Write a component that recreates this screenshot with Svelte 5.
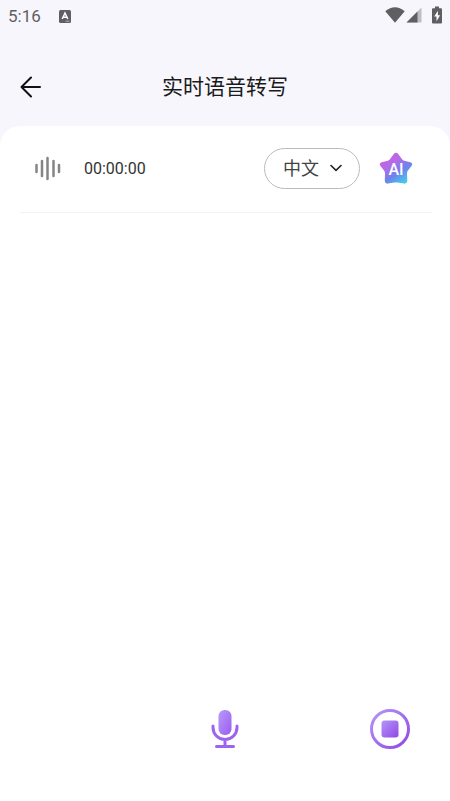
<script>
    const languages = [
        { value: 'zh', label: '中文' },
        { value: 'en', label: '英文' },
        { value: 'ja', label: '日文' }
    ];

    // Wave icon bars: x, top, bottom
    const bars = [
        [1.5, 9, 16],
        [7, 5, 20],
        [12.5, 2, 23],
        [18.5, 5, 20],
        [24, 9, 16]
    ];

    let language = $state('zh');
    let seconds = $state(0);
    let timer = null;

    const pad = (n) => String(n).padStart(2, '0');

    let elapsed = $derived(
        `${pad(Math.floor(seconds / 3600))}:${pad(Math.floor(seconds / 60) % 60)}:${pad(seconds % 60)}`
    );

    function start() {
        if (timer) return;
        timer = setInterval(() => seconds++, 1000);
    }

    function stop() {
        clearInterval(timer);
        timer = null;
    }
</script>

<div class="screen">
    <div class="status-bar">
        <span class="clock">5:16</span>
        <svg class="app-badge" width="12" height="13" viewBox="0 0 12 13" aria-hidden="true">
            <rect width="12" height="13" rx="1.5" fill="#5f5f63" />
            <path d="M3.2 9 6 3l2.8 6M4.3 7.2h3.4" fill="none" stroke="#fff" stroke-width="1.5" />
            <path d="M6.5 11.2h4" stroke="#c8c8cc" stroke-width="0.8" />
        </svg>
        <div class="system-icons">
            <svg width="20" height="16" viewBox="0 0 20 16" aria-hidden="true">
                <path d="M0.3 4.2Q10-3.6 19.7 4.2L10 15.8Z" fill="#5f5f63" />
            </svg>
            <svg class="signal" width="16" height="16" viewBox="0 0 16 16" aria-hidden="true">
                <path d="M15.5 0.5v15H0.5Z" fill="#bebec4" />
                <path d="M11.5 4.5v11H0.5Z" fill="#5f5f63" />
            </svg>
            <svg class="battery" width="10" height="18" viewBox="0 0 10 18" aria-hidden="true">
                <path d="M3 0.5h4v1.7h2q1 0 1 1v13.3q0 1-1 1H1q-1 0-1-1V3.2q0-1 1-1h2Z" fill="#5f5f63" />
                <path d="M5.9 4.8 2.2 10.5h2.3v4.7l3.6-6H5.9Z" fill="#fff" />
            </svg>
        </div>
    </div>

    <header>
        <button class="back" aria-label="返回">
            <svg width="22" height="22" viewBox="0 0 22 22" aria-hidden="true">
                <path d="M11 1.5 1.5 11l9.5 9.5M1.5 11H20" />
            </svg>
        </button>
        <h1>实时语音转写</h1>
    </header>

    <main>
        <div class="toolbar">
            <svg class="wave" width="26" height="25" viewBox="0 0 26 25" aria-hidden="true">
                {#each bars as [x, top, bottom]}
                    <path d="M{x} {top}V{bottom}" />
                {/each}
            </svg>
            <span class="time">{elapsed}</span>

            <div class="language">
                <select aria-label="语言" bind:value={language}>
                    {#each languages as item}
                        <option value={item.value}>{item.label}</option>
                    {/each}
                </select>
                <svg width="12" height="8" viewBox="0 0 12 8" aria-hidden="true">
                    <path d="M1 1.5 6 6.3 11 1.5" />
                </svg>
            </div>

            <button class="ai" aria-label="AI">
                <svg width="34" height="34" viewBox="0 0 34 34" aria-hidden="true">
                    <defs>
                        <linearGradient id="star" x1="0.15" y1="0.1" x2="0.8" y2="1">
                            <stop offset="0" stop-color="#d05be0" />
                            <stop offset="0.3" stop-color="#b46be8" />
                            <stop offset="0.62" stop-color="#6e83ec" />
                            <stop offset="1" stop-color="#3fd5ea" />
                        </linearGradient>
                    </defs>
                    <path
                        d="M14.8 2Q17-0.6 19.2 2L23.3 7.6Q24 8.5 25.2 8.8L31.3 10.3Q34.4 11.3 32.5 14L28.8 18.8Q28 20 28 21.4L28.3 28.6Q28.2 32 25 31.6L18.6 30.6Q17 30.4 15.4 30.6L9 31.6Q5.8 32 5.8 28.6L6 21.4Q6 20 5.2 18.8L1.5 14Q-0.4 11.3 2.7 10.3L8.8 8.8Q10 8.5 10.7 7.6Z"
                        fill="url(#star)"
                    />
                    <text x="17" y="23" text-anchor="middle">AI</text>
                </svg>
            </button>
        </div>

        <div class="transcript"></div>

        <footer>
            <button class="mic" aria-label="开始录音" onclick={start}>
                <svg width="28" height="40" viewBox="0 0 28 40" aria-hidden="true">
                    <defs>
                        <linearGradient id="mic" x1="0" y1="0" x2="1" y2="1">
                            <stop offset="0" stop-color="#b99afc" />
                            <stop offset="1" stop-color="#9a5cf0" />
                        </linearGradient>
                    </defs>
                    <rect x="7.5" y="1" width="13" height="25" rx="6" fill="url(#mic)" />
                    <path d="M2 17v1.5a12 12 0 0 0 24 0V17M14 31v6M5.5 37.5h17" />
                </svg>
            </button>
            <button class="stop" aria-label="停止录音" onclick={stop}>
                <svg width="40" height="40" viewBox="0 0 40 40" aria-hidden="true">
                    <defs>
                        <linearGradient id="ring" x1="0" y1="0" x2="1" y2="1">
                            <stop offset="0" stop-color="#b497fa" />
                            <stop offset="1" stop-color="#9147e4" />
                        </linearGradient>
                    </defs>
                    <circle cx="20" cy="20" r="18.5" fill="none" stroke="url(#ring)" stroke-width="3" />
                    <rect x="11.5" y="11.5" width="17" height="17" rx="3" fill="url(#ring)" />
                </svg>
            </button>
        </footer>
    </main>
</div>

<style>
    :global(body) {
        margin: 0;
        background: #f7f6fd;
    }

    .screen {
        display: flex;
        flex-direction: column;
        min-height: 100vh;
        font-family: Roboto, "Noto Sans CJK SC", sans-serif;
        color: #1a1a1a;
        background: #f7f6fd;
    }

    button {
        display: flex;
        padding: 0;
        border: none;
        background: none;
        cursor: pointer;
    }

    .status-bar {
        display: flex;
        align-items: center;
        height: 32px;
        padding: 0 8px;
        color: #5f5f63;
    }

    .clock {
        font-size: 17px;
    }

    .app-badge {
        margin-left: 18px;
    }

    .system-icons {
        display: flex;
        align-items: center;
        margin-left: auto;
        margin-bottom: 3px;
    }

    .system-icons .signal {
        margin-left: 1px;
    }

    .system-icons .battery {
        margin-left: 10px;
    }

    header {
        display: grid;
        grid-template-columns: 1fr auto 1fr;
        align-items: center;
        height: 78px;
        padding: 16px 20px 0;
    }

    .back path {
        fill: none;
        stroke: #111;
        stroke-width: 2;
        stroke-linecap: round;
        stroke-linejoin: round;
    }

    h1 {
        margin: 0;
        font-size: 21px;
        font-weight: 400;
        line-height: 32px;
    }

    main {
        display: flex;
        flex-direction: column;
        flex: 1;
        border-radius: 20px 20px 0 0;
        background: #fff;
    }

    .toolbar {
        display: flex;
        align-items: center;
        margin: 0 18px 0 20px;
        padding: 22px 19px 23px 15px;
        border-bottom: 1px solid #f3f3f3;
    }

    .wave path {
        stroke: #858585;
        stroke-width: 2.5;
        stroke-linecap: round;
    }

    .time {
        margin-left: 23px;
        font-size: 16px;
        color: #333;
    }

    .language {
        position: relative;
        margin-left: auto;
    }

    .language select {
        appearance: none;
        width: 96px;
        height: 41px;
        padding: 0 18px;
        border: 1px solid #bbb;
        border-radius: 21px;
        background: #fff;
        font: inherit;
        font-size: 18px;
        color: #444;
    }

    .language svg {
        position: absolute;
        right: 18px;
        top: 16px;
        pointer-events: none;
    }

    .language path {
        fill: none;
        stroke: #222;
        stroke-width: 1.6;
        stroke-linecap: round;
        stroke-linejoin: round;
    }

    .ai {
        margin-left: 19px;
    }

    .ai text {
        font-family: Roboto, sans-serif;
        font-size: 16px;
        font-weight: 500;
        fill: #fff;
    }

    .transcript {
        flex: 1;
    }

    footer {
        display: grid;
        grid-template-columns: 1fr auto 1fr;
        align-items: center;
        padding: 0 40px 52px;
    }

    .mic {
        grid-column: 2;
    }

    .mic path {
        fill: none;
        stroke: #9d63f0;
        stroke-width: 3;
        stroke-linecap: round;
    }

    .stop {
        justify-self: end;
    }
</style>
